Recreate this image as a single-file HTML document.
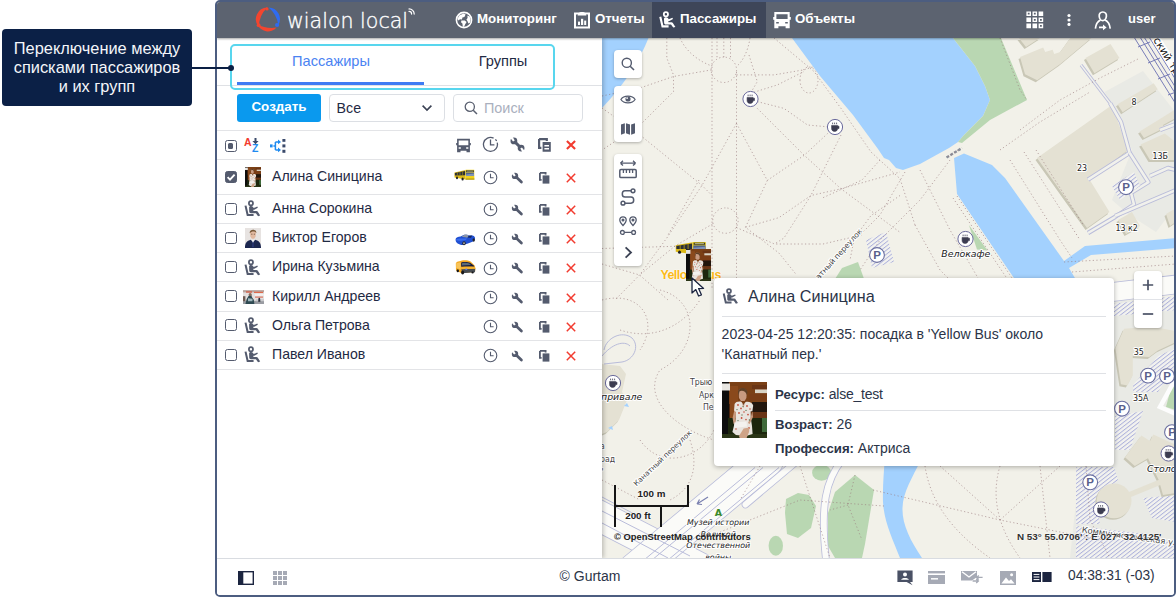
<!DOCTYPE html>
<html lang="ru">
<head>
<meta charset="utf-8">
<title>Wialon Local — Пассажиры</title>
<style>
*{box-sizing:border-box;margin:0;padding:0}
html,body{width:1176px;height:597px;overflow:hidden;background:#fff;font-family:"Liberation Sans",sans-serif;color:#1f2a44}
#callout{position:absolute;left:2px;top:29px;width:190px;height:76.5px;background:#0b2046;border-radius:4px;color:#f4f6fa;font-size:16.4px;line-height:19px;text-align:center;padding-top:10px;white-space:nowrap}
#cline{z-index:30;position:absolute;left:192px;top:67px;width:38px;height:2px;background:#0a1f44}
#cdot{position:absolute;left:228px;top:64.5px;width:6.4px;height:6.4px;border-radius:50%;background:#0a1f44;z-index:30}
#frame{position:absolute;left:215px;top:0;width:961px;height:597px;border:2px solid #4c5d80;border-radius:5px;overflow:hidden;background:#fff}
#top{position:absolute;left:0;top:0;width:957px;height:36px;background:#5c6370;color:#fff;box-shadow:0 1px 2px rgba(0,0,0,.35);z-index:5}
#left{position:absolute;left:0;top:36px;width:385px;height:520px;background:#fff;z-index:4;box-shadow:2px 0 4px rgba(0,0,0,.2)}
#map{position:absolute;left:385px;top:36px;width:572px;height:520px;background:#f2f1e9;overflow:hidden}
#foot{position:absolute;left:0;top:556px;width:957px;height:37px;background:#fff;border-top:1px solid #d9dce1;z-index:6}

#logo{position:absolute;left:70px;top:6.2px;font-family:"DejaVu Sans Light","DejaVu Sans","Liberation Sans",sans-serif;font-weight:200;font-size:20.6px;line-height:26px;letter-spacing:0px;color:#fff;white-space:nowrap;-webkit-text-stroke:0.35px #fff}
.nav{position:absolute;top:0;height:36px;display:flex;align-items:center;font-weight:700;font-size:13.3px;white-space:nowrap}
.nav svg{position:absolute;top:9px}
.nav span{position:absolute;top:9.2px;line-height:16px}
.nav.act{background:#3e4659}
#user{position:absolute;left:911px;top:9.4px;font-weight:700;font-size:13px;line-height:16px}

#hl{position:absolute;left:13px;top:6px;width:325px;height:46px;border:2px solid #58d6ee;border-radius:5px;z-index:3}
#tabline{position:absolute;left:0;top:47px;width:385px;height:1px;background:#dfe1e5}
#tabul{position:absolute;left:20px;top:44px;width:187px;height:3px;background:#3f7cf4}
.tab{position:absolute;top:12.8px;height:20px;line-height:20px;font-size:14.6px;text-align:center;white-space:nowrap}
#create{position:absolute;left:20px;top:56px;width:84px;height:28px;border-radius:3px;background:#0a99ee;color:#fff;font-weight:700;font-size:13.4px;line-height:25.6px;text-align:center}
#sel{position:absolute;left:112px;top:56px;width:116px;height:28px;border:1px solid #dcdfe4;border-radius:4px;font-size:14.2px;line-height:27px;padding-left:6.6px;color:#1f2a44}
#search{position:absolute;left:236px;top:56px;width:130px;height:28px;border:1px solid #dcdfe4;border-radius:4px;font-size:14.4px;line-height:26px;color:#aab0be}
#search span{position:absolute;left:30px;top:0}
.sep{position:absolute;left:0;width:385px;height:1px;background:#e3e4e7}
.pi{position:absolute}
.cb{position:absolute;left:8px;width:12px;height:12px;border:1.4px solid #545b6e;border-radius:2.5px;background:#fff}
.cb.on{background:#545b6e}
.cb.on svg{position:absolute;left:-1.4px;top:-1.4px}
.cb i{position:absolute;left:2px;top:2px;width:5.4px;height:5.4px;border-radius:1.5px;background:#545b6e}
.nm{position:absolute;left:55px;height:18px;line-height:18px;font-size:14.1px;white-space:nowrap;color:#1f2a44}
.az{position:absolute;font-weight:700;font-size:10.5px;line-height:11px}
.mbtn{position:absolute;width:28px;background:#fff;border-radius:4px;box-shadow:0 1px 3px rgba(0,0,0,.28)}
.mbtn svg{position:absolute}
.sb{position:absolute;background:#151515}
.sbt{position:absolute;text-align:center;font-weight:700;font-size:9.8px;line-height:12px;color:#222;text-shadow:0 0 2px #fff,0 0 2px #fff}
#osm{position:absolute;left:12px;top:492.6px;font-weight:700;font-size:9.4px;line-height:12px;color:#222;white-space:nowrap}
#coords{position:absolute;left:415px;top:493px;font-weight:700;font-size:9.85px;line-height:12px;color:#333;white-space:nowrap;text-shadow:0 0 2px #fff,0 0 2px #fff}
#ylab{position:absolute;left:58.4px;top:230.6px;font-weight:700;font-size:12.4px;letter-spacing:-0.5px;line-height:13px;color:#fbb917;white-space:nowrap;text-shadow:0 0 1.5px #fff,0 0 1.5px #fff}
#pop{position:absolute;left:112px;top:240px;width:400px;height:188px;background:#fff;border-radius:4px;box-shadow:0 1px 5px rgba(0,0,0,.3);color:#2b3448}
#ptitle{position:absolute;left:34px;top:8px;font-size:16.2px;line-height:20px;white-space:nowrap}
.psep{position:absolute;height:1px;background:#dfe1e5}
#pmsg{position:absolute;left:7.6px;top:46px;font-size:14.05px;line-height:20px;white-space:nowrap}
.prow{position:absolute;left:61px;font-size:14px;line-height:20px;white-space:nowrap}
.prow b{font-weight:700;font-size:13.2px}
#gurtam{position:absolute;left:323px;top:8.2px;width:100px;text-align:center;font-size:14px;line-height:18px;color:#2b3448}
#clock{position:absolute;left:851px;top:8.4px;font-size:13.8px;line-height:18px;color:#2b3448;white-space:nowrap}
</style>
</head>
<body>
<div id="callout">Переключение между<br>списками пассажиров<br>и их групп</div>
<div id="cline"></div><div id="cdot"></div>
<div id="frame">
<div id="top">
<svg style="position:absolute;left:37.3px;top:3.1px" width="28" height="28" viewBox="0 0 28 28">
 <path d="M13.4 2.5 A11.6 11.6 0 0 0 4.8 21.8 A27 27 0 0 1 13.4 2.5 Z" fill="#f3452f"/>
 <path d="M3.3 19.2 A11.6 11.6 0 0 0 22.6 22.6 A30 30 0 0 1 3.3 19.2 Z" fill="#f3452f"/>
 <path d="M14.6 2.6 A11.6 11.6 0 0 1 24.3 20.2 A27 27 0 0 0 14.6 2.6 Z" fill="#2f6bf0"/>
 <circle cx="13" cy="3.9" r="1.6" fill="#f3452f"/><circle cx="23.1" cy="20" r="2.1" fill="#2f6bf0"/><circle cx="4.6" cy="20.2" r="1.9" fill="#f3452f"/>
</svg>
<div id="logo">wialon local</div>
<svg style="position:absolute;left:190.5px;top:5px" width="8.6" height="8.6" viewBox="0 0 10 10" fill="none" stroke="#fff" stroke-width="1.4" stroke-linecap="round"><path d="M1.2 2.2 A6 6 0 0 1 7.2 8.2"/><path d="M1.2 5.2 A3 3 0 0 1 4.2 8.2"/></svg>

<div class="nav" style="left:231px;width:110px">
 <svg style="left:6.8px;top:8.8px" width="18" height="18" viewBox="0 0 18 18"><circle cx="9" cy="9" r="7.6" fill="none" stroke="#fff" stroke-width="1.6"/><path d="M4.2 4.6 L8.6 2.6 L10.6 3.4 L9.4 6 L7.4 6.6 L7 8.4 L5 8.2 L3.4 9.6 L2.4 8 Z M6.4 9.6 L9.8 9.4 L11.6 11 L10.2 13.2 L9 16 L7.8 15.6 L7.4 12.4 L6 11.2 Z M12.4 4.4 L14.6 5.6 L15.6 8.4 L15.2 11.4 L13.4 12.6 L12.6 10.6 L11.4 8.6 L12.6 7 Z" fill="#fff"/></svg><span style="left:29px">Мониторинг</span>
</div>
<div class="nav" style="left:350px;width:84px">
 <svg style="left:7px;top:8.8px" width="16" height="18" viewBox="0 0 16 18"><path d="M1 2.6 H15 V16.6 H1 Z" fill="none" stroke="#fff" stroke-width="2"/><path d="M4.4 2.4 C5 0.4 11 0.4 11.6 2.4 L12.4 4.4 H3.6 Z" fill="#fff"/><rect x="4" y="10.6" width="2" height="3.4" fill="#fff"/><rect x="7" y="7.8" width="2.2" height="6.2" fill="#fff"/><rect x="10.2" y="9.6" width="2" height="4.4" fill="#fff"/></svg><span style="left:28px">Отчеты</span>
</div>
<div class="nav act" style="left:435px;width:114px">
 <svg style="left:7px;top:9.2px" width="17" height="18" viewBox="0 0 17 18"><circle cx="6.9" cy="3.3" r="2.1" fill="none" stroke="#fff" stroke-width="1.8"/><path d="M1.3 5.8 L3.5 15.4 H9.6" fill="none" stroke="#fff" stroke-width="2.1"/><path d="M5 7.4 C5.4 6.2 7.6 5.8 8.6 6.8 L9.8 8.2 L13.4 6.8 L14 8 L10.4 10 L9.4 10 L9.4 11.2 L12.4 11.2 C13.2 11.2 13.6 11.6 14 12.2 L16.4 16 L14.2 16.6 L12 13.6 L7 13.6 C5.8 13.6 5.2 12.8 5.1 11.8 Z" fill="#fff"/></svg><span style="left:28px">Пассажиры</span>
</div>
<div class="nav" style="left:549px;width:100px">
 <svg style="left:7px;top:9.4px" width="18" height="18" viewBox="0 0 18 18"><path fill-rule="evenodd" fill="#fff" d="M1.3 1 H16.7 V6 H17.8 V8.8 H16.7 V17.2 H12.6 V15.3 H5.4 V17.2 H1.3 V8.8 H0.2 V6 H1.3 Z M3.4 3.3 V8 H14.6 V3.3 Z M3.2 11 V12.5 H5.8 V11 Z M12.2 11 V12.5 H14.8 V11 Z"/></svg><span style="left:29px">Объекты</span>
</div>

<svg style="position:absolute;left:809px;top:9px" width="19" height="19" viewBox="0 0 19 19" fill="#fff" fill-rule="evenodd">
 <path d="M0.4 0.4h4.6v4.6h-4.6z M1.8 1.8v1.8h1.8v-1.8z"/><path d="M6.5 0.4h4.6v4.6h-4.6z M7.9 1.8v1.8h1.8v-1.8z"/><path d="M12.6 0.4h4.6v4.6h-4.6z"/>
 <path d="M0.4 6.5h4.6v4.6h-4.6z"/><path d="M6.5 6.5h4.6v4.6h-4.6z M7.9 7.9v1.8h1.8v-1.8z"/><path d="M12.6 6.5h4.6v4.6h-4.6z M14 7.9v1.8h1.8v-1.8z"/>
 <path d="M0.4 12.6h4.6v4.6h-4.6z"/><path d="M6.5 12.6h4.6v4.6h-4.6z"/><path d="M12.6 12.6h4.6v4.6h-4.6z M14 14v1.8h1.8v-1.8z"/>
</svg>
<svg style="position:absolute;left:849px;top:10px" width="6" height="18" viewBox="0 0 6 18" fill="#fff"><circle cx="3" cy="3.5" r="1.6"/><circle cx="3" cy="8" r="1.6"/><circle cx="3" cy="12.4" r="1.6"/></svg>
<svg style="position:absolute;left:877px;top:7.5px" width="19" height="21" viewBox="0 0 19 21" fill="none" stroke="#fff"><path d="M8.8 2 C11.4 2 12.6 4 12.4 6.2 C12.2 8.6 10.6 10.6 8.8 10.6 C7 10.6 5.4 8.6 5.2 6.2 C5 4 6.2 2 8.8 2 Z" stroke-width="1.7"/><path d="M6.6 10 C3.8 11.2 2 13.4 1.4 18.6" stroke-width="1.7"/><path d="M11 10 C13.8 11.2 15.6 13.4 16.2 18.6" stroke-width="1.7"/><path d="M5 17.4 H10.4" stroke-width="1.7"/><path d="M9 14.6 L12.6 17.4 L9 20.2 Z" fill="#fff" stroke="none"/></svg>
<div id="user">user</div>
</div>
<div id="left"><div id="tabline"></div><div id="tabul"></div>
<div id="hl"></div>
<div class="tab" style="left:14px;width:200px;color:#4b83f2">Пассажиры</div>
<div class="tab" style="left:186px;width:200px;color:#1f2a44">Группы</div>
<div id="create">Создать</div>
<div id="sel">Все<svg width="12" height="8" viewBox="0 0 12 8" style="position:absolute;left:91px;top:9.2px"><path d="M1.6 1.6 L6 6 L10.4 1.6" fill="none" stroke="#3b4254" stroke-width="1.6"/></svg></div>
<div id="search"><svg width="14" height="14" viewBox="0 0 14 14" style="position:absolute;left:10px;top:6px"><circle cx="5.8" cy="5.8" r="4.6" fill="none" stroke="#5a6070" stroke-width="1.3"/><path d="M9.2 9.2 L13 13" stroke="#5a6070" stroke-width="1.5"/></svg><span>Поиск</span></div>
<div class="sep" style="top:92px"></div>
<div class="sep" style="top:121px"></div>
<div class="sep" style="top:156px"></div>
<div class="sep" style="top:185px"></div>
<div class="sep" style="top:214px"></div>
<div class="sep" style="top:243px"></div>
<div class="sep" style="top:273px"></div>
<div class="sep" style="top:302px"></div>
<div class="sep" style="top:331px"></div>
<span class="cb" style="top:102.2px"><i></i></span>
<span class="az" style="left:27px;top:99.0px;color:#f23b2f">A</span>
<span class="az" style="left:35px;top:104.6px;color:#1f8bf0">Z</span>
<svg class="pi" style="left:35px;top:100px" width="7" height="7" viewBox="0 0 7 7"><path d="M2.5 0 H4.5 V3 H6.6 L3.5 6.2 L0.4 3 H2.5 Z" fill="#3b4a6b"/></svg>
<svg class="pi" style="left:53px;top:101px" width="16" height="14" viewBox="0 0 16 14"><rect x="0" y="5.4" width="2.6" height="3" fill="#1f8bf0"/><path d="M3.4 6.9 H5.4 M5.4 2.9 V10.9 M5.4 2.9 H8.4 M5.4 10.9 H8.4" stroke="#1f8bf0" stroke-width="1.5" fill="none"/><path d="M8 0.6 L11 2.9 L8 5.2 Z M8 8.6 L11 10.9 L8 13.2 Z" fill="#1f8bf0"/><rect x="12.4" y="0" width="3" height="2.8" fill="#3b4a6b"/><rect x="12.4" y="5.4" width="3" height="3" fill="#3b4a6b"/><rect x="12.4" y="10.8" width="3" height="3" fill="#3b4a6b"/></svg>
<svg class="pi" style="left:238px;top:100px" width="17" height="15" viewBox="0 0 18 18"><path fill-rule="evenodd" fill="#545b6e" d="M1.3 1 H16.7 V6 H17.8 V8.8 H16.7 V17.2 H12.6 V15.3 H5.4 V17.2 H1.3 V8.8 H0.2 V6 H1.3 Z M3.2 3 V8.6 H14.8 V3 Z M3.2 11 V12.8 H5.8 V11 Z M12.2 11 V12.8 H14.8 V11 Z"/></svg>
<svg class="pi" style="left:265px;top:98px" width="17" height="17" viewBox="0 0 17 17" fill="none" stroke="#545b6e"><path d="M11.6 2.2 A7 7 0 1 0 15.2 6.6" stroke-width="1.3"/><path d="M13.4 3.4 A7 7 0 0 1 14.6 5" stroke-width="1.3"/><path d="M8.5 3.6 V8.9 H12.4" stroke-width="1.3"/></svg>
<svg class="pi" style="left:293px;top:99.4px" width="15" height="15" viewBox="0 0 15 15"><circle cx="3.9" cy="3.9" r="3.4" fill="#545b6e"/><circle cx="11.1" cy="11.1" r="3.4" fill="#545b6e"/><path d="M4 4 L11 11" stroke="#545b6e" stroke-width="3" stroke-linecap="round"/><path d="M4.6 3.2 L1.8 0.4 L0 0 L0 2.2 L3.2 4.6 Z" fill="#fff" transform="rotate(14 3.9 3.9)"/><path d="M10.4 11.8 L13.2 14.6 L15 15 L15 12.8 L11.8 10.4 Z" fill="#fff" transform="rotate(14 11.1 11.1)"/></svg>
<svg class="pi" style="left:321px;top:100px" width="13" height="14" viewBox="0 0 13 14"><path d="M1.1 1.1 H8.8 V3 M1.1 1.1 V9.8 H3.4" fill="none" stroke="#545b6e" stroke-width="2.2"/><path fill-rule="evenodd" d="M4.6 4 H12.8 V13.8 H4.6 Z M6.4 7 V8.4 H11 V7 Z M6.4 10 V11.4 H11 V10 Z" fill="#545b6e"/></svg>
<svg class="pi" style="left:349px;top:102px" width="10" height="10" viewBox="0 0 10 10"><path d="M0.9 0.9 L9.1 9.1 M9.1 0.9 L0.9 9.1" stroke="#f23b2f" stroke-width="2.1" fill="none"/></svg>
<span class="cb on" style="top:133.1px"><svg width="12" height="12" viewBox="0 0 12 12"><path d="M2.6 6.2 L5 8.6 L9.6 3.6" fill="none" stroke="#fff" stroke-width="1.9"/></svg></span>
<svg class="pi" style="left:28px;top:129.0px" width="16" height="20"><use href="#photo" width="16" height="20"/></svg>
<div class="nm" style="top:128.7px">Алина Синицина</div>
<svg class="pi" style="left:237px;top:130.5px" width="21" height="12" viewBox="0 0 21 12"><path d="M0.5 3.4 L11.6 0.9 L11.6 10.6 L0.5 8.6 Z" fill="#dcb916"/><path d="M0.9 3.9 L11.2 2 L11.2 6.3 L0.9 6.4 Z" fill="#2b2f38"/><path d="M3.4 3.4 V6.4 M6 3 V6.4 M8.6 2.4 V6.4" stroke="#b89c14" stroke-width=".6"/><path d="M11.6 0.8 H20.2 L20.4 10.6 H11.6 Z" fill="#f2d31a"/><rect x="12.2" y="1.3" width="7.6" height="1.7" fill="#34352a"/><rect x="13" y="1.7" width="6" height=".8" fill="#b9b98a"/><rect x="12" y="3.5" width="8" height="3.4" fill="#52658f"/><path d="M12 5.4 L20 4.6 V6.9 H12 Z" fill="#7f93b8"/><rect x="11.6" y="9.6" width="8.8" height="1" fill="#a48c10"/><ellipse cx="3" cy="8.9" rx="1" ry="1.3" fill="#1d1f25"/><ellipse cx="8.6" cy="10" rx="1.1" ry="1.5" fill="#1d1f25"/></svg>
<svg class="pi" style="left:266px;top:132.0px" width="15" height="15" viewBox="0 0 15 15" fill="none" stroke="#545b6e"><circle cx="7.5" cy="7.5" r="6.3" stroke-width="1.1"/><path d="M7.5 3.8 V7.7 H10.6" stroke-width="1.1"/></svg>
<svg class="pi" style="left:294px;top:133.5px" width="13" height="13" viewBox="0 0 13 13"><circle cx="4" cy="3.9" r="3.2" fill="#545b6e"/><path d="M4.4 4.3 L10.4 10.1" stroke="#545b6e" stroke-width="2.8" stroke-linecap="round"/><path d="M4.6 3.3 L1.8 0.5 L0 0 L0 2.2 L3.2 4.7 Z" fill="#fff" transform="rotate(12 4 3.9)"/></svg>
<svg class="pi" style="left:322px;top:133.7px" width="11" height="12" viewBox="0 0 11 12"><path d="M0.9 0.9 H6.6 V2.4 M0.9 0.9 V7.8 H2.6" fill="none" stroke="#545b6e" stroke-width="1.8"/><rect x="3.6" y="3.4" width="6.8" height="8.2" fill="#545b6e"/></svg>
<svg class="pi" style="left:349px;top:134.5px" width="10" height="10" viewBox="0 0 10 10"><path d="M0.8 0.8 L9.2 9.2 M9.2 0.8 L0.8 9.2" stroke="#f23b2f" stroke-width="1.5" fill="none"/></svg>
<span class="cb" style="top:165.1px"></span>
<svg class="pi" style="left:27.3px;top:162.1px" width="17" height="17.5" viewBox="0 0 17 18"><circle cx="6.9" cy="3.3" r="2.1" fill="none" stroke="#545b6e" stroke-width="1.8"/><path d="M1.3 5.8 L3.5 15.4 H9.6" fill="none" stroke="#545b6e" stroke-width="2.1"/><path d="M5 7.4 C5.4 6.2 7.6 5.8 8.6 6.8 L9.8 8.2 L13.4 6.8 L14 8 L10.4 10 L9.4 10 L9.4 11.2 L12.4 11.2 C13.2 11.2 13.6 11.6 14 12.2 L16.4 16 L14.2 16.6 L12 13.6 L7 13.6 C5.8 13.6 5.2 12.8 5.1 11.8 Z" fill="#545b6e"/></svg>
<div class="nm" style="top:160.7px">Анна Сорокина</div>
<svg class="pi" style="left:266px;top:164.0px" width="15" height="15" viewBox="0 0 15 15" fill="none" stroke="#545b6e"><circle cx="7.5" cy="7.5" r="6.3" stroke-width="1.1"/><path d="M7.5 3.8 V7.7 H10.6" stroke-width="1.1"/></svg>
<svg class="pi" style="left:294px;top:165.5px" width="13" height="13" viewBox="0 0 13 13"><circle cx="4" cy="3.9" r="3.2" fill="#545b6e"/><path d="M4.4 4.3 L10.4 10.1" stroke="#545b6e" stroke-width="2.8" stroke-linecap="round"/><path d="M4.6 3.3 L1.8 0.5 L0 0 L0 2.2 L3.2 4.7 Z" fill="#fff" transform="rotate(12 4 3.9)"/></svg>
<svg class="pi" style="left:322px;top:165.7px" width="11" height="12" viewBox="0 0 11 12"><path d="M0.9 0.9 H6.6 V2.4 M0.9 0.9 V7.8 H2.6" fill="none" stroke="#545b6e" stroke-width="1.8"/><rect x="3.6" y="3.4" width="6.8" height="8.2" fill="#545b6e"/></svg>
<svg class="pi" style="left:349px;top:166.5px" width="10" height="10" viewBox="0 0 10 10"><path d="M0.8 0.8 L9.2 9.2 M9.2 0.8 L0.8 9.2" stroke="#f23b2f" stroke-width="1.5" fill="none"/></svg>
<span class="cb" style="top:193.6px"></span>
<svg class="pi" style="left:28px;top:189.8px" width="16" height="20" viewBox="0 0 16 20"><rect width="16" height="20" fill="#e7e3e1"/><path d="M5 5 C4.8 1.4 11.2 1.4 11 5 L10.6 8.6 L9.2 10.8 H6.8 L5.4 8.6 Z" fill="#e2b9a0"/><path d="M4.7 5.2 C4 0.6 12 0.6 11.3 5.2 C10.4 3.2 7 2.6 4.7 5.2 Z" fill="#7a5a3a"/><path d="M0 20 C0 15 1.6 13 6 11.8 L8 14.6 L10 11.8 C14.4 13 16 15 16 20 Z" fill="#1c2750"/><path d="M6.4 11.6 L8 15 L9.6 11.6 L8 12.4 Z" fill="#f4f4f6"/><path d="M7.6 13.4 L8.4 13.4 L8.8 18.6 L8 19.6 L7.2 18.6 Z" fill="#2b3a7a"/><path d="M6.2 6.2 H7.4 M8.8 6.2 H10" stroke="#5a4030" stroke-width=".7"/></svg>
<div class="nm" style="top:190.0px">Виктор Егоров</div>
<svg class="pi" style="left:238px;top:196.3px" width="21" height="12" viewBox="0 0 21 12"><path d="M0.6 5 C1 3.6 3 3 5.6 2.6 L8 1.2 C10 0.4 13 0.6 14.4 1.6 L17.6 1.4 C19.4 1.8 20.2 3 20 4.6 L19.6 6.4 C17 8 13 9.4 9.6 10.6 C7 11.4 4.6 10.6 2.6 9.4 C1 8.4 0.4 6.6 0.6 5 Z" fill="#2050d2"/><path d="M6.6 2.9 L9 0.9 C10.6 0.3 12.6 0.5 13.6 1.4 L12.4 3.7 C10.6 3 8.4 2.8 6.6 2.9 Z" fill="#8e97a6"/><path d="M12.6 3.5 L14 1.7 L17.2 1.6 L16 3.8 Z" fill="#17265a"/><path d="M1 5.4 C3 4.4 6 4.2 8.4 4.6 L12 4.2 L11 6 C8 6.6 4 7 1.4 6.6 Z" fill="#3a6cec"/><ellipse cx="9" cy="9.3" rx="1.7" ry="2" fill="#23252c"/><ellipse cx="9" cy="9.3" rx=".8" ry="1" fill="#b9bcc4"/><ellipse cx="18.7" cy="6" rx="1.2" ry="1.7" fill="#23252c"/></svg>
<svg class="pi" style="left:266px;top:193.3px" width="15" height="15" viewBox="0 0 15 15" fill="none" stroke="#545b6e"><circle cx="7.5" cy="7.5" r="6.3" stroke-width="1.1"/><path d="M7.5 3.8 V7.7 H10.6" stroke-width="1.1"/></svg>
<svg class="pi" style="left:294px;top:194.8px" width="13" height="13" viewBox="0 0 13 13"><circle cx="4" cy="3.9" r="3.2" fill="#545b6e"/><path d="M4.4 4.3 L10.4 10.1" stroke="#545b6e" stroke-width="2.8" stroke-linecap="round"/><path d="M4.6 3.3 L1.8 0.5 L0 0 L0 2.2 L3.2 4.7 Z" fill="#fff" transform="rotate(12 4 3.9)"/></svg>
<svg class="pi" style="left:322px;top:195.0px" width="11" height="12" viewBox="0 0 11 12"><path d="M0.9 0.9 H6.6 V2.4 M0.9 0.9 V7.8 H2.6" fill="none" stroke="#545b6e" stroke-width="1.8"/><rect x="3.6" y="3.4" width="6.8" height="8.2" fill="#545b6e"/></svg>
<svg class="pi" style="left:349px;top:195.8px" width="10" height="10" viewBox="0 0 10 10"><path d="M0.8 0.8 L9.2 9.2 M9.2 0.8 L0.8 9.2" stroke="#f23b2f" stroke-width="1.5" fill="none"/></svg>
<span class="cb" style="top:222.8px"></span>
<svg class="pi" style="left:27.3px;top:220.6px" width="17" height="17.5" viewBox="0 0 17 18"><circle cx="6.9" cy="3.3" r="2.1" fill="none" stroke="#545b6e" stroke-width="1.8"/><path d="M1.3 5.8 L3.5 15.4 H9.6" fill="none" stroke="#545b6e" stroke-width="2.1"/><path d="M5 7.4 C5.4 6.2 7.6 5.8 8.6 6.8 L9.8 8.2 L13.4 6.8 L14 8 L10.4 10 L9.4 10 L9.4 11.2 L12.4 11.2 C13.2 11.2 13.6 11.6 14 12.2 L16.4 16 L14.2 16.6 L12 13.6 L7 13.6 C5.8 13.6 5.2 12.8 5.1 11.8 Z" fill="#545b6e"/></svg>
<div class="nm" style="top:219.2px">Ирина Кузьмина</div>
<svg class="pi" style="left:238px;top:222.0px" width="21" height="15" viewBox="0 0 21 15"><path d="M0.8 3.6 C1 2 2.4 1.4 4.4 1.2 L7 0.5 C10 0 13.6 0.4 15.6 1.6 L19.6 5.6 L20.4 8.6 L20 12 L6.6 13.2 L1 10.6 Z" fill="#f5a81f"/><path d="M1.2 3.2 L5.6 2.2 L5.8 9.6 L1.2 8 Z" fill="#f8c45a"/><path d="M6.2 2.6 C9 1.8 13 2 15 2.8 L19.4 6 L19 6.8 C15 6.2 10 6.4 6.2 6.8 Z" fill="#141a3e"/><path d="M7 3.2 C9.6 2.6 12.6 2.8 14.4 3.4 L16 5 L7 5.6 Z" fill="#5b6a78"/><path d="M6.4 9 L20.2 8.6 L20 12.2 L7 13.2 Z" fill="#474c52"/><path d="M6.2 7 L20 6.8 L20.3 8.8 L6.4 9.2 Z" fill="#f7b32c"/><rect x="10.4" y="8.6" width="1.8" height="1.3" fill="#5f7df0"/><ellipse cx="2.8" cy="10.8" rx="1.2" ry="1.5" fill="#15161a"/><ellipse cx="7.6" cy="12.6" rx="1.5" ry="2" fill="#15161a"/><ellipse cx="17.6" cy="12.6" rx="1.2" ry="1" fill="#15161a"/></svg>
<svg class="pi" style="left:266px;top:222.5px" width="15" height="15" viewBox="0 0 15 15" fill="none" stroke="#545b6e"><circle cx="7.5" cy="7.5" r="6.3" stroke-width="1.1"/><path d="M7.5 3.8 V7.7 H10.6" stroke-width="1.1"/></svg>
<svg class="pi" style="left:294px;top:224.0px" width="13" height="13" viewBox="0 0 13 13"><circle cx="4" cy="3.9" r="3.2" fill="#545b6e"/><path d="M4.4 4.3 L10.4 10.1" stroke="#545b6e" stroke-width="2.8" stroke-linecap="round"/><path d="M4.6 3.3 L1.8 0.5 L0 0 L0 2.2 L3.2 4.7 Z" fill="#fff" transform="rotate(12 4 3.9)"/></svg>
<svg class="pi" style="left:322px;top:224.2px" width="11" height="12" viewBox="0 0 11 12"><path d="M0.9 0.9 H6.6 V2.4 M0.9 0.9 V7.8 H2.6" fill="none" stroke="#545b6e" stroke-width="1.8"/><rect x="3.6" y="3.4" width="6.8" height="8.2" fill="#545b6e"/></svg>
<svg class="pi" style="left:349px;top:225.0px" width="10" height="10" viewBox="0 0 10 10"><path d="M0.8 0.8 L9.2 9.2 M9.2 0.8 L0.8 9.2" stroke="#f23b2f" stroke-width="1.5" fill="none"/></svg>
<span class="cb" style="top:252.3px"></span>
<svg class="pi" style="left:26px;top:251.7px" width="21" height="14.4" viewBox="0 0 21 14"><rect width="21" height="14" fill="#e4e0df"/><rect x="0" y="0" width="21" height="2.2" fill="#b8a39c"/><rect x="3" y="1.2" width="6" height="1.2" fill="#d4553a"/><rect x="11" y="1.6" width="9" height="1.2" fill="#e0694a"/><rect x="12" y="4" width="9" height="1.4" fill="#f6f4f3"/><rect x="12" y="6.4" width="8" height="1" fill="#d8604a"/><rect x="0" y="10.6" width="21" height="3.4" fill="#9a9ca2"/><rect x="13" y="9" width="8" height="2" fill="#c9cacd"/><path d="M2.4 14 L3.6 9 L5.4 6 L6.6 4.4 L8.2 4.6 L9 7 L10.8 9.6 L11.4 14 Z" fill="#2f4a52"/><circle cx="7.2" cy="4.2" r="1.5" fill="#8a6a5a"/><path d="M5 8 L9.6 8.6 L9.4 11 L5 11 Z" fill="#9fb7bd"/><path d="M15.4 8 L17 7.6 L17.4 11.6 L15.2 11.6 Z" fill="#2a2f3a"/><rect x="0" y="6" width="2.4" height="5" fill="#6d5a52"/></svg>
<div class="nm" style="top:248.7px">Кирилл Андреев</div>
<svg class="pi" style="left:266px;top:252.0px" width="15" height="15" viewBox="0 0 15 15" fill="none" stroke="#545b6e"><circle cx="7.5" cy="7.5" r="6.3" stroke-width="1.1"/><path d="M7.5 3.8 V7.7 H10.6" stroke-width="1.1"/></svg>
<svg class="pi" style="left:294px;top:253.5px" width="13" height="13" viewBox="0 0 13 13"><circle cx="4" cy="3.9" r="3.2" fill="#545b6e"/><path d="M4.4 4.3 L10.4 10.1" stroke="#545b6e" stroke-width="2.8" stroke-linecap="round"/><path d="M4.6 3.3 L1.8 0.5 L0 0 L0 2.2 L3.2 4.7 Z" fill="#fff" transform="rotate(12 4 3.9)"/></svg>
<svg class="pi" style="left:322px;top:253.7px" width="11" height="12" viewBox="0 0 11 12"><path d="M0.9 0.9 H6.6 V2.4 M0.9 0.9 V7.8 H2.6" fill="none" stroke="#545b6e" stroke-width="1.8"/><rect x="3.6" y="3.4" width="6.8" height="8.2" fill="#545b6e"/></svg>
<svg class="pi" style="left:349px;top:254.5px" width="10" height="10" viewBox="0 0 10 10"><path d="M0.8 0.8 L9.2 9.2 M9.2 0.8 L0.8 9.2" stroke="#f23b2f" stroke-width="1.5" fill="none"/></svg>
<span class="cb" style="top:281.3px"></span>
<svg class="pi" style="left:27.3px;top:279.1px" width="17" height="17.5" viewBox="0 0 17 18"><circle cx="6.9" cy="3.3" r="2.1" fill="none" stroke="#545b6e" stroke-width="1.8"/><path d="M1.3 5.8 L3.5 15.4 H9.6" fill="none" stroke="#545b6e" stroke-width="2.1"/><path d="M5 7.4 C5.4 6.2 7.6 5.8 8.6 6.8 L9.8 8.2 L13.4 6.8 L14 8 L10.4 10 L9.4 10 L9.4 11.2 L12.4 11.2 C13.2 11.2 13.6 11.6 14 12.2 L16.4 16 L14.2 16.6 L12 13.6 L7 13.6 C5.8 13.6 5.2 12.8 5.1 11.8 Z" fill="#545b6e"/></svg>
<div class="nm" style="top:277.7px">Ольга Петрова</div>
<svg class="pi" style="left:266px;top:281.0px" width="15" height="15" viewBox="0 0 15 15" fill="none" stroke="#545b6e"><circle cx="7.5" cy="7.5" r="6.3" stroke-width="1.1"/><path d="M7.5 3.8 V7.7 H10.6" stroke-width="1.1"/></svg>
<svg class="pi" style="left:294px;top:282.5px" width="13" height="13" viewBox="0 0 13 13"><circle cx="4" cy="3.9" r="3.2" fill="#545b6e"/><path d="M4.4 4.3 L10.4 10.1" stroke="#545b6e" stroke-width="2.8" stroke-linecap="round"/><path d="M4.6 3.3 L1.8 0.5 L0 0 L0 2.2 L3.2 4.7 Z" fill="#fff" transform="rotate(12 4 3.9)"/></svg>
<svg class="pi" style="left:322px;top:282.7px" width="11" height="12" viewBox="0 0 11 12"><path d="M0.9 0.9 H6.6 V2.4 M0.9 0.9 V7.8 H2.6" fill="none" stroke="#545b6e" stroke-width="1.8"/><rect x="3.6" y="3.4" width="6.8" height="8.2" fill="#545b6e"/></svg>
<svg class="pi" style="left:349px;top:283.5px" width="10" height="10" viewBox="0 0 10 10"><path d="M0.8 0.8 L9.2 9.2 M9.2 0.8 L0.8 9.2" stroke="#f23b2f" stroke-width="1.5" fill="none"/></svg>
<span class="cb" style="top:310.6px"></span>
<svg class="pi" style="left:27.3px;top:308.4px" width="17" height="17.5" viewBox="0 0 17 18"><circle cx="6.9" cy="3.3" r="2.1" fill="none" stroke="#545b6e" stroke-width="1.8"/><path d="M1.3 5.8 L3.5 15.4 H9.6" fill="none" stroke="#545b6e" stroke-width="2.1"/><path d="M5 7.4 C5.4 6.2 7.6 5.8 8.6 6.8 L9.8 8.2 L13.4 6.8 L14 8 L10.4 10 L9.4 10 L9.4 11.2 L12.4 11.2 C13.2 11.2 13.6 11.6 14 12.2 L16.4 16 L14.2 16.6 L12 13.6 L7 13.6 C5.8 13.6 5.2 12.8 5.1 11.8 Z" fill="#545b6e"/></svg>
<div class="nm" style="top:307.0px">Павел Иванов</div>
<svg class="pi" style="left:266px;top:310.3px" width="15" height="15" viewBox="0 0 15 15" fill="none" stroke="#545b6e"><circle cx="7.5" cy="7.5" r="6.3" stroke-width="1.1"/><path d="M7.5 3.8 V7.7 H10.6" stroke-width="1.1"/></svg>
<svg class="pi" style="left:294px;top:311.8px" width="13" height="13" viewBox="0 0 13 13"><circle cx="4" cy="3.9" r="3.2" fill="#545b6e"/><path d="M4.4 4.3 L10.4 10.1" stroke="#545b6e" stroke-width="2.8" stroke-linecap="round"/><path d="M4.6 3.3 L1.8 0.5 L0 0 L0 2.2 L3.2 4.7 Z" fill="#fff" transform="rotate(12 4 3.9)"/></svg>
<svg class="pi" style="left:322px;top:312.0px" width="11" height="12" viewBox="0 0 11 12"><path d="M0.9 0.9 H6.6 V2.4 M0.9 0.9 V7.8 H2.6" fill="none" stroke="#545b6e" stroke-width="1.8"/><rect x="3.6" y="3.4" width="6.8" height="8.2" fill="#545b6e"/></svg>
<svg class="pi" style="left:349px;top:312.8px" width="10" height="10" viewBox="0 0 10 10"><path d="M0.8 0.8 L9.2 9.2 M9.2 0.8 L0.8 9.2" stroke="#f23b2f" stroke-width="1.5" fill="none"/></svg></div>
<div id="map"><svg id="msvg" width="572" height="520" viewBox="602 38 572 520" style="position:absolute;left:0;top:0">
<rect x="602" y="38" width="572" height="520" fill="#f2f1e9"/>
<path d="M1104.5 92 L1143 71 L1176 113 L1176 206 L1156 232 L1128 214 L1112 200 L1132 150 L1112 105 Z" fill="#e9eae5"/>
<path d="M1110 300 L1176 300 L1176 558 L1070 558 L1074 520 L1080 470 L1100 420 L1112 330 Z" fill="#e9eae5"/>
<path d="M602 38 L648.5 38 C640 60 625 84 602 108 Z" fill="#a3d1fe"/>
<path d="M792 38 L820 76 L853 115 L878 149 L884 158 L889 160 L896 168 L903 170 L920 164 L949 148 L958 142 L964 135 L975 124 L983 116 L990 100 L985 86 L975 66 L953 38 Z" fill="#a3d1fe"/>
<path d="M954 158 L964 153.5 L992 165 L1005 178 L1064 261 L1085 246 L1176 238 L1176 248 L1091 255 L1069 268 L1082 290 L1022 290 L957 194 Z" fill="#a3d1fe"/>
<path d="M884.6 460 L921 460 C912 478 903 492 902.5 508 C902 524 910 540 922 558 L900 558 C893 540 884 522 883 502 C882.5 486 884 472 884.6 460 Z" fill="#a3d1fe"/>
<path d="M953 38 L1001 38 L1027 100 L990 120 L962 143 L958 142 L964 135 L975 124 L983 116 L990 100 L985 86 L975 66 Z" fill="#b9d7b2"/>
<path d="M968.9 225 L987.6 250.6 L977 249.5 Z" fill="#b9d7b2"/>
<path d="M855 475 L874 490 L865 544 L862 558 L835 558 L828 546 L828 513 L835 492 Z" fill="#b9d7b2"/>
<path d="M786 499 L798 493 L809 495 L816 506 L811 528 L798 538 L787 534 L785 513 Z" fill="#b9d7b2"/>
<ellipse cx="821.6" cy="472.7" rx="9.5" ry="8" fill="#b9d7b2"/>
<ellipse cx="775.8" cy="545.7" rx="7.2" ry="10" fill="#b9d7b2"/>
<path d="M765 492 L790 470 L802 480 L800 520 L778 526 L766 512 Z" fill="#b9d7b2" opacity="0"/>
<path d="M828 290 L842 268 L858 262 L868 290 Z" fill="#b9d7b2"/>
<path d="M846 250 L858 246 L862 262 L850 266 Z" fill="#b9d7b2" opacity=".0"/>
<path d="M1172 384 L1176 380 L1176 410 L1166 407 Z" fill="#b9d7b0"/>
<polygon points="1018.5,59 1041.7,49.6 1043.7,54 1051.1,51.7 1052.7,56 1058.8,54 1068.8,40 1089.9,40 1058.8,66 1035.7,82.2 1023.5,76.2" fill="#c9c7b6"/>
<polygon points="1020,57 1043.2,47.6 1045.2,52 1052.6,49.7 1054.2,54 1060.3,52 1070.3,38 1091.4,38 1060.3,64 1037.2,80.2 1025,74.2" fill="#e4e1d3"/>
<polygon points="1017.5,40 1038.5,40 1024.5,49 1020.5,44" fill="#c9c7b6"/>
<polygon points="1019,38 1040,38 1026,47 1022,42" fill="#e4e1d3"/>
<polygon points="1083.9,60 1109.0,46 1118.0,60 1092.9,75.2" fill="#c9c7b6"/>
<polygon points="1085.4,58 1110.5,44 1119.5,58 1094.4,73.2" fill="#e4e1d3"/>
<polygon points="1116.0,106.3 1152.2,85.2 1156.2,91.2 1121.1,114.3" fill="#c9c7b6"/>
<polygon points="1117.5,104.3 1153.7,83.2 1157.7,89.2 1122.6,112.3" fill="#e4e1d3"/>
<polygon points="1035.5,160 1110.5,107 1126.5,152 1088.0,181.5 1108.0,214 1085.5,230" fill="#c9c7b6"/>
<polygon points="1037,158 1112,105 1128,150 1089.5,179.5 1109.5,212 1087,228" fill="#e4e1d3"/>
<polygon points="1138.1,133.4 1159.2,120.4 1172.3,112.3 1174.5,116 1174.5,120 1161.5,127 1162.5,130 1142.5,140" fill="#c9c7b6"/>
<polygon points="1139.6,131.4 1160.7,118.4 1173.8,110.3 1176,114 1176,118 1163,125 1164,128 1144,138" fill="#e4e1d3"/>
<polygon points="1139.1,146.5 1163.3,135.4 1174.5,144.5 1174.5,162 1148.5,162" fill="#c9c7b6"/>
<polygon points="1140.6,144.5 1164.8,133.4 1176,142.5 1176,160 1150,160" fill="#e4e1d3"/>
<polygon points="1116.5,222 1130.5,214 1138.5,228 1124.5,236" fill="#c9c7b6"/>
<polygon points="1118,220 1132,212 1140,226 1126,234" fill="#e4e1d3"/>
<polygon points="1164.5,216 1174.5,210 1174.5,224 1168.5,228" fill="#c9c7b6"/>
<polygon points="1166,214 1176,208 1176,222 1170,226" fill="#e4e1d3"/>
<polygon points="600.5,366 618.5,368 624.5,376 620.5,394 625.5,402 617.5,422 605.5,434 600.5,436" fill="#c9c7b6"/>
<polygon points="602,364 620,366 626,374 622,392 627,400 619,420 607,432 602,434" fill="#e4e1d3"/>
<path d="M604 350 C606 338 622 330 632 338 C640 346 634 360 622 362 L604 364 M602 356 C612 344 624 340 630 346" fill="none" stroke="#b9bcda" stroke-width="1"/>
<path d="M624 406 l3 -3 l2 4 z M608 428 l4 -2 l1 4 z" fill="#a3d1fe"/>
<path d="M580 506 L700 568" fill="none" stroke="#b9bcda" stroke-width="31.6" stroke-linecap="round"/>
<path d="M580 506 L700 568" fill="none" stroke="#fbfbf8" stroke-width="30" stroke-linecap="round"/>
<path d="M634.8 570 L678 534 L766.8 460" fill="none" stroke="#b9bcda" stroke-width="34.6" stroke-linecap="round"/>
<path d="M634.8 570 L678 534 L766.8 460" fill="none" stroke="#fbfbf8" stroke-width="33" stroke-linecap="round"/>
<path d="M644 560 L678 531.7 L755 467.5 M652 560 L686 531.7 L763 467.5 M668 560 L702 531.7 L779 467.5 M602 497 L640 517 M602 511 L690 556 M602 523 L668 558" fill="none" stroke="#b9bcda" stroke-width="1"/>
<path d="M745.5 504.5 L800 458.6" fill="none" stroke="#b9bcda" stroke-width="7.6" stroke-linecap="round"/>
<path d="M745.5 504.5 L800 458.6" fill="none" stroke="#fbfbf8" stroke-width="6" stroke-linecap="round"/>
<path d="M842 460 C826 480 820 505 826 560" fill="none" stroke="#b9bcda" stroke-width="7.6" stroke-linecap="round"/>
<path d="M842 460 C826 480 820 505 826 560" fill="none" stroke="#fbfbf8" stroke-width="6" stroke-linecap="round"/>
<path d="M1108 292.5 L1176 284.5" fill="none" stroke="#b9bcda" stroke-width="19.6" stroke-linecap="round"/>
<path d="M1108 292.5 L1176 284.5" fill="none" stroke="#fbfbf8" stroke-width="18" stroke-linecap="round"/>
<path d="M1081 65 L1110 103" fill="none" stroke="#b9bcda" stroke-width="3.2" stroke-linejoin="round"/>
<path d="M1081 65 L1110 103" fill="none" stroke="#f1f1ec" stroke-width="1.4" stroke-linejoin="round"/>
<path d="M1110 103 L1121 122 L1129.6 152.8 L1088 179.6" fill="none" stroke="#b9bcda" stroke-width="4.4" stroke-linejoin="round"/>
<path d="M1110 103 L1121 122 L1129.6 152.8 L1088 179.6" fill="none" stroke="#f1f1ec" stroke-width="2.6" stroke-linejoin="round"/>
<path d="M1129.6 152.8 L1148.4 182.2 L1131 193 L1134 204.5 L1115 217 L1088 233" fill="none" stroke="#b9bcda" stroke-width="4.4" stroke-linejoin="round"/>
<path d="M1129.6 152.8 L1148.4 182.2 L1131 193 L1134 204.5 L1115 217 L1088 233" fill="none" stroke="#f1f1ec" stroke-width="2.6" stroke-linejoin="round"/>
<path d="M1115 216 L1176 190" fill="none" stroke="#b9bcda" stroke-width="4.4" stroke-linejoin="round"/>
<path d="M1115 216 L1176 190" fill="none" stroke="#f1f1ec" stroke-width="2.6" stroke-linejoin="round"/>
<path d="M1160 130 L1176 124 M1150 176 L1168 168 L1176 170" fill="none" stroke="#b9bcda" stroke-width="4.4" stroke-linejoin="round"/>
<path d="M1160 130 L1176 124 M1150 176 L1168 168 L1176 170" fill="none" stroke="#f1f1ec" stroke-width="2.6" stroke-linejoin="round"/>
<path d="M1155 38 L1176 72" stroke="#fdfdfb" stroke-width="10" fill="none"/>
<path d="M1134.6 38 L1176 104.3 M1140.6 38 L1176 94.7 M1144.7 38 L1176 88.2 M1149.7 38 L1176 80.2" stroke="#6a6fb2" stroke-width=".9" fill="none"/>
<path d="M1138 47 L1150 42 M1148 63 L1160 58 M1158 79 L1170 74 M1168 95 L1176 92" stroke="#6a6fb2" stroke-width=".9" fill="none"/>
<path d="M946.5 157.5 L962 148" stroke="#8a8f9a" stroke-width="2.4" stroke-dasharray="3 1.5" fill="none"/>
<defs><pattern id="hp" width="3.2" height="3.2" patternUnits="userSpaceOnUse" patternTransform="rotate(-38)"><rect width="3.2" height="3.2" fill="#f3f3ef"/><line x1="0" y1="0.5" x2="3.2" y2="0.5" stroke="#a3a8d8" stroke-width="0.8"/></pattern></defs>
<path d="M1112 186 L1134 172 L1140 186 L1120 200 Z" fill="url(#hp)"/>
<path d="M866 240 L886 232 L894 262 L872 268 Z" fill="url(#hp)"/>
<path d="M1112 304 L1176 296 L1176 310 L1114 316 Z M1133 385 L1158 356 L1176 348 L1176 364 L1158 392 L1133 392 Z M1115 416 L1143 411 L1130 450 L1115 450 Z M1076 467 L1114 467 L1118 480 L1096 500 L1100 524 L1076 524 Z M1143 498 L1176 495 L1176 522 L1152 518 Z M1076 526 L1148 534 L1176 545 L1176 558 L1076 558 Z" fill="url(#hp)"/>
<path d="M1176 378 L1160 407 L1176 414" fill="none" stroke="#fdfdfd" stroke-width="4.5"/>
<polygon points="1113.9,350.3 1122.6,330.7 1149.9,328.5 1174.5,333 1174.5,344 1156.4,352.5 1147.7,359 1131.3,358 1131.3,377.5 1125.9,387.4 1119.4,386.3" fill="#c9c7b6"/>
<polygon points="1115.4,348.3 1124.1,328.7 1151.4,326.5 1176,331 1176,342 1157.9,350.5 1149.2,357 1132.8,356 1132.8,375.5 1127.4,385.4 1120.9,384.3" fill="#e4e1d3"/>
<polygon points="1123.5,459.2 1139.9,437.4 1148.5,443 1151.8,436.4 1174.5,447 1174.5,495 1161.5,497 1157.3,482 1146.5,460.3 1133.3,468" fill="#c9c7b6"/>
<polygon points="1125,457.2 1141.4,435.4 1150,441 1153.3,434.4 1176,445 1176,493 1163,495 1158.8,480 1148,458.3 1134.8,466" fill="#e4e1d3"/>
<path d="M1114 501 L1163 481" stroke="#e4e1d3" stroke-width="5.5" fill="none"/>
<circle cx="1112.8" cy="502.4" r="17.4" fill="#c9c7b6"/><circle cx="1114.1" cy="500.8" r="17.4" fill="#e4e1d3"/>
<path d="M723.8 57.1 a12.7 12.7 0 1 0 0.1 0" fill="none" stroke="#98787a" stroke-width="1" stroke-dasharray="1.2 2.4" opacity=".62"/>
<path d="M725.4 207.9 a12.7 12.7 0 1 0 0.1 0" fill="none" stroke="#98787a" stroke-width="1" stroke-dasharray="1.2 2.4" opacity=".62"/>
<path d="M712 38 V 290" fill="none" stroke="#98787a" stroke-width="1" stroke-dasharray="1.2 2.4" opacity=".62"/>
<path d="M736.5 72 V 290" fill="none" stroke="#98787a" stroke-width="1" stroke-dasharray="1.2 2.4" opacity=".62"/>
<path d="M717 38 V58" fill="none" stroke="#98787a" stroke-width="1" stroke-dasharray="1.2 2.4" opacity=".62"/>
<path d="M723.8 38 V57" fill="none" stroke="#98787a" stroke-width="1" stroke-dasharray="1.2 2.4" opacity=".62"/>
<path d="M730.5 38 V58" fill="none" stroke="#98787a" stroke-width="1" stroke-dasharray="1.2 2.4" opacity=".62"/>
<path d="M680 38 C686 52 700 62 712 66" fill="none" stroke="#98787a" stroke-width="1" stroke-dasharray="1.2 2.4" opacity=".62"/>
<path d="M750 38 C748 52 742 62 737 66" fill="none" stroke="#98787a" stroke-width="1" stroke-dasharray="1.2 2.4" opacity=".62"/>
<path d="M666.8 38 L666.8 58 L673.5 75 L673.5 91.6 L640 125 L602 150" fill="none" stroke="#98787a" stroke-width="1" stroke-dasharray="1.2 2.4" opacity=".62"/>
<path d="M602 96 L640 88 L673.5 76.5 L712 69.8" fill="none" stroke="#98787a" stroke-width="1" stroke-dasharray="1.2 2.4" opacity=".62"/>
<path d="M736.5 74.9 L774 74.9 L804 69.8 L814 66.5" fill="none" stroke="#98787a" stroke-width="1" stroke-dasharray="1.2 2.4" opacity=".62"/>
<path d="M749 55 L757.3 81.6 L750.5 93.3" fill="none" stroke="#98787a" stroke-width="1" stroke-dasharray="1.2 2.4" opacity=".62"/>
<path d="M750.5 93.3 L777.4 84.9 L804 71.5" fill="none" stroke="#98787a" stroke-width="1" stroke-dasharray="1.2 2.4" opacity=".62"/>
<path d="M640 135 L702 185.4 L712 195.5" fill="none" stroke="#98787a" stroke-width="1" stroke-dasharray="1.2 2.4" opacity=".62"/>
<path d="M602 108 L640 135" fill="none" stroke="#98787a" stroke-width="1" stroke-dasharray="1.2 2.4" opacity=".62"/>
<path d="M736.5 123.4 L702 185.4 L666.8 238 L639.6 275 L615 300" fill="none" stroke="#98787a" stroke-width="1" stroke-dasharray="1.2 2.4" opacity=".62"/>
<path d="M736.5 123.4 L767.3 180.4 L745.5 227.3 L778.9 253 L796.6 275" fill="none" stroke="#98787a" stroke-width="1" stroke-dasharray="1.2 2.4" opacity=".62"/>
<path d="M757.3 108.4 L804.2 155.3 L841 188.8 L900 232.3" fill="none" stroke="#98787a" stroke-width="1" stroke-dasharray="1.2 2.4" opacity=".62"/>
<path d="M767.3 180.4 L804.2 155.3 L827.6 133.5" fill="none" stroke="#98787a" stroke-width="1" stroke-dasharray="1.2 2.4" opacity=".62"/>
<path d="M745.5 227.3 L779 217.6 L810.9 195.5 L841 188.8 L900 172" fill="none" stroke="#98787a" stroke-width="1" stroke-dasharray="1.2 2.4" opacity=".62"/>
<path d="M841 135 L810.9 195.5 L784 238 L774.5 244" fill="none" stroke="#98787a" stroke-width="1" stroke-dasharray="1.2 2.4" opacity=".62"/>
<path d="M757.3 101.6 L784 108.4 L807.5 125 L827.6 126.8" fill="none" stroke="#98787a" stroke-width="1" stroke-dasharray="1.2 2.4" opacity=".62"/>
<path d="M774 38 L814 71.5 L841 108.4 L871 152 L900 178.7 L915 225" fill="none" stroke="#98787a" stroke-width="1" stroke-dasharray="1.2 2.4" opacity=".62"/>
<path d="M800 80 a9 13 0 1 0 18 0 a9 13 0 1 0 -18 0" fill="none" stroke="#98787a" stroke-width="1" stroke-dasharray="1.2 2.4" opacity=".62"/>
<path d="M900 195.5 L871 215.6 L854.4 238 L850 260" fill="none" stroke="#98787a" stroke-width="1" stroke-dasharray="1.2 2.4" opacity=".62"/>
<path d="M712.5 224 L675 246 L639.6 275" fill="none" stroke="#98787a" stroke-width="1" stroke-dasharray="1.2 2.4" opacity=".62"/>
<path d="M602 248.5 L675 246.3" fill="none" stroke="#98787a" stroke-width="1" stroke-dasharray="1.2 2.4" opacity=".62"/>
<path d="M602 264 L639.6 275 L668 300" fill="none" stroke="#98787a" stroke-width="1" stroke-dasharray="1.2 2.4" opacity=".62"/>
<path d="M736.4 227.5 L774.5 244 L823 244 L862 235" fill="none" stroke="#98787a" stroke-width="1" stroke-dasharray="1.2 2.4" opacity=".62"/>
<path d="M699 180 L668 235" fill="none" stroke="#98787a" stroke-width="1" stroke-dasharray="1.2 2.4" opacity=".62"/>
<path d="M880 160 L862 180 L823 197.7" fill="none" stroke="#98787a" stroke-width="1" stroke-dasharray="1.2 2.4" opacity=".62"/>
<path d="M905 172 L880 215 L850 245" fill="none" stroke="#98787a" stroke-width="1" stroke-dasharray="1.2 2.4" opacity=".62"/>
<path d="M950 160 L920 200 L880 240 L860 270" fill="none" stroke="#98787a" stroke-width="1" stroke-dasharray="1.2 2.4" opacity=".62"/>
<path d="M958 150 L946 158" fill="none" stroke="#98787a" stroke-width="1" stroke-dasharray="1.2 2.4" opacity=".62"/>
<path d="M915 225 L940 270 L960 290" fill="none" stroke="#98787a" stroke-width="1" stroke-dasharray="1.2 2.4" opacity=".62"/>
<path d="M920 170 L950 230 L985 290" fill="none" stroke="#98787a" stroke-width="1" stroke-dasharray="1.2 2.4" opacity=".62"/>
<path d="M602 300 C640 290 660 320 640 350" fill="none" stroke="#98787a" stroke-width="1" stroke-dasharray="1.2 2.4" opacity=".62"/>
<path d="M660 290 C700 300 700 350 660 370 C640 400 680 430 714 440" fill="none" stroke="#98787a" stroke-width="1" stroke-dasharray="1.2 2.4" opacity=".62"/>
<path d="M620 330 C650 340 680 330 700 300" fill="none" stroke="#98787a" stroke-width="1" stroke-dasharray="1.2 2.4" opacity=".62"/>
<path d="M640 440 C660 470 700 460 714 430" fill="none" stroke="#98787a" stroke-width="1" stroke-dasharray="1.2 2.4" opacity=".62"/>
<path d="M602 480 L640 500" fill="none" stroke="#98787a" stroke-width="1" stroke-dasharray="1.2 2.4" opacity=".62"/>
<path d="M690 440 C700 470 690 490 670 500" fill="none" stroke="#98787a" stroke-width="1" stroke-dasharray="1.2 2.4" opacity=".62"/>
<path d="M1020 130 L1060 100 L1100 78 L1140 58" fill="none" stroke="#98787a" stroke-width="1" stroke-dasharray="1.2 2.4" opacity=".62"/>
<path d="M1000 150 L1040 122 L1090 92" fill="none" stroke="#98787a" stroke-width="1" stroke-dasharray="1.2 2.4" opacity=".62"/>
<path d="M1010 160 L1060 240 L1072 258" fill="none" stroke="#98787a" stroke-width="1" stroke-dasharray="1.2 2.4" opacity=".62"/>
<path d="M1024 152 L1080 240" fill="none" stroke="#98787a" stroke-width="1" stroke-dasharray="1.2 2.4" opacity=".62"/>
<path d="M1036 150 L1084 226" fill="none" stroke="#98787a" stroke-width="1" stroke-dasharray="1.2 2.4" opacity=".62"/>
<path d="M1064 262 L1176 256" fill="none" stroke="#98787a" stroke-width="1" stroke-dasharray="1.2 2.4" opacity=".62"/>
<path d="M1072 272 L1176 264" fill="none" stroke="#98787a" stroke-width="1" stroke-dasharray="1.2 2.4" opacity=".62"/>
<path d="M957 196 L1012 278" fill="none" stroke="#98787a" stroke-width="1" stroke-dasharray="1.2 2.4" opacity=".62"/>
<path d="M953 198 L1008 280" fill="none" stroke="#98787a" stroke-width="1" stroke-dasharray="1.2 2.4" opacity=".62"/>
<path d="M1000 38 L1020 90 L1027 100" fill="none" stroke="#98787a" stroke-width="1" stroke-dasharray="1.2 2.4" opacity=".62"/>
<path d="M925 466 C930 500 950 530 990 558" fill="none" stroke="#98787a" stroke-width="1" stroke-dasharray="1.2 2.4" opacity=".62"/>
<path d="M1000 466 C990 500 1000 530 1020 558" fill="none" stroke="#98787a" stroke-width="1" stroke-dasharray="1.2 2.4" opacity=".62"/>
<path d="M1040 466 L1050 558" fill="none" stroke="#98787a" stroke-width="1" stroke-dasharray="1.2 2.4" opacity=".62"/>
<path d="M1086 466 L1090 520 L1110 558" fill="none" stroke="#98787a" stroke-width="1" stroke-dasharray="1.2 2.4" opacity=".62"/>
<path d="M800 466 L830 558" fill="none" stroke="#98787a" stroke-width="1" stroke-dasharray="1.2 2.4" opacity=".62"/>
<path d="M873 490 L1000 520 L1100 540" fill="none" stroke="#98787a" stroke-width="1" stroke-dasharray="1.2 2.4" opacity=".62"/>
<path d="M940 466 L1000 520" fill="none" stroke="#98787a" stroke-width="1" stroke-dasharray="1.2 2.4" opacity=".62"/>
<path d="M1060 466 L1000 520" fill="none" stroke="#98787a" stroke-width="1" stroke-dasharray="1.2 2.4" opacity=".62"/>
<path d="M700 540 L800 500 L884 506" fill="none" stroke="#98787a" stroke-width="1" stroke-dasharray="1.2 2.4" opacity=".62"/>
<path d="M760 466 L740 500" fill="none" stroke="#98787a" stroke-width="1" stroke-dasharray="1.2 2.4" opacity=".62"/>
<path d="M855 475 L848 505 L862 540" fill="none" stroke="#98787a" stroke-width="1" stroke-dasharray="1.2 2.4" opacity=".62"/>
<path d="M848 505 L830 510" fill="none" stroke="#98787a" stroke-width="1" stroke-dasharray="1.2 2.4" opacity=".62"/>
<g transform="translate(750.5 99)"><circle r="7.6" fill="#fff" stroke="#6a6a9c" stroke-width="1"/><path d="M-3.4 -1.6 H2.6 V1.4 C2.6 3.4 1.4 4.4 -0.4 4.4 C-2.2 4.4 -3.4 3.4 -3.4 1.4 Z M2.6 -0.8 H4 V1.6 H2.6" fill="#3c3c50" stroke="#3c3c50" stroke-width=".6"/><path d="M-2.4 -4.4 V-2.8 M-0.4 -4.4 V-2.8 M1.6 -4.4 V-2.8" stroke="#3c3c50" stroke-width=".8"/></g>
<g transform="translate(835 127)"><circle r="7.6" fill="#fff" stroke="#6a6a9c" stroke-width="1"/><path d="M-3.4 -1.6 H2.6 V1.4 C2.6 3.4 1.4 4.4 -0.4 4.4 C-2.2 4.4 -3.4 3.4 -3.4 1.4 Z M2.6 -0.8 H4 V1.6 H2.6" fill="#3c3c50" stroke="#3c3c50" stroke-width=".6"/><path d="M-2.4 -4.4 V-2.8 M-0.4 -4.4 V-2.8 M1.6 -4.4 V-2.8" stroke="#3c3c50" stroke-width=".8"/></g>
<g transform="translate(965.5 239)"><circle r="7.6" fill="#fff" stroke="#6a6a9c" stroke-width="1"/><path d="M-3.4 -1.6 H2.6 V1.4 C2.6 3.4 1.4 4.4 -0.4 4.4 C-2.2 4.4 -3.4 3.4 -3.4 1.4 Z M2.6 -0.8 H4 V1.6 H2.6" fill="#3c3c50" stroke="#3c3c50" stroke-width=".6"/><path d="M-2.4 -4.4 V-2.8 M-0.4 -4.4 V-2.8 M1.6 -4.4 V-2.8" stroke="#3c3c50" stroke-width=".8"/></g>
<g transform="translate(613 383)"><circle r="7.6" fill="#fff" stroke="#6a6a9c" stroke-width="1"/><path d="M-3.4 -1.6 H2.6 V1.4 C2.6 3.4 1.4 4.4 -0.4 4.4 C-2.2 4.4 -3.4 3.4 -3.4 1.4 Z M2.6 -0.8 H4 V1.6 H2.6" fill="#3c3c50" stroke="#3c3c50" stroke-width=".6"/><path d="M-2.4 -4.4 V-2.8 M-0.4 -4.4 V-2.8 M1.6 -4.4 V-2.8" stroke="#3c3c50" stroke-width=".8"/></g>
<g transform="translate(1101 509.5)"><circle r="7.6" fill="#fff" stroke="#6a6a9c" stroke-width="1"/><path d="M-3.4 -1.6 H2.6 V1.4 C2.6 3.4 1.4 4.4 -0.4 4.4 C-2.2 4.4 -3.4 3.4 -3.4 1.4 Z M2.6 -0.8 H4 V1.6 H2.6" fill="#3c3c50" stroke="#3c3c50" stroke-width=".6"/><path d="M-2.4 -4.4 V-2.8 M-0.4 -4.4 V-2.8 M1.6 -4.4 V-2.8" stroke="#3c3c50" stroke-width=".8"/></g>
<g transform="translate(1168.6 453.5)"><circle r="7.6" fill="#fff" stroke="#6a6a9c" stroke-width="1"/><path d="M-3.4 -1.6 H2.6 V1.4 C2.6 3.4 1.4 4.4 -0.4 4.4 C-2.2 4.4 -3.4 3.4 -3.4 1.4 Z M2.6 -0.8 H4 V1.6 H2.6" fill="#3c3c50" stroke="#3c3c50" stroke-width=".6"/><path d="M-2.4 -4.4 V-2.8 M-0.4 -4.4 V-2.8 M1.6 -4.4 V-2.8" stroke="#3c3c50" stroke-width=".8"/></g>
<g transform="translate(877 255)"><circle r="7.4" fill="#fff" stroke="#6a6fa0" stroke-width="1.1"/><text x="0" y="4" text-anchor="middle" font-family="Liberation Sans,sans-serif" font-weight="700" font-size="11.5" fill="#5a5f8c">P</text></g>
<g transform="translate(1126 187.2)"><circle r="7.4" fill="#fff" stroke="#6a6fa0" stroke-width="1.1"/><text x="0" y="4" text-anchor="middle" font-family="Liberation Sans,sans-serif" font-weight="700" font-size="11.5" fill="#5a5f8c">P</text></g>
<g transform="translate(1148.1 375.6)"><circle r="7.4" fill="#fff" stroke="#6a6fa0" stroke-width="1.1"/><text x="0" y="4" text-anchor="middle" font-family="Liberation Sans,sans-serif" font-weight="700" font-size="11.5" fill="#5a5f8c">P</text></g>
<g transform="translate(1167 376.2)"><circle r="7.4" fill="#fff" stroke="#6a6fa0" stroke-width="1.1"/><text x="0" y="4" text-anchor="middle" font-family="Liberation Sans,sans-serif" font-weight="700" font-size="11.5" fill="#5a5f8c">P</text></g>
<g transform="translate(1122 408.7)"><circle r="7.4" fill="#fff" stroke="#6a6fa0" stroke-width="1.1"/><text x="0" y="4" text-anchor="middle" font-family="Liberation Sans,sans-serif" font-weight="700" font-size="11.5" fill="#5a5f8c">P</text></g>
<g transform="translate(1090.2 482.3)"><circle r="7.4" fill="#fff" stroke="#6a6fa0" stroke-width="1.1"/><text x="0" y="4" text-anchor="middle" font-family="Liberation Sans,sans-serif" font-weight="700" font-size="11.5" fill="#5a5f8c">P</text></g>
<g transform="translate(1172 432.2)"><circle r="7.4" fill="#fff" stroke="#6a6fa0" stroke-width="1.1"/><text x="0" y="4" text-anchor="middle" font-family="Liberation Sans,sans-serif" font-weight="700" font-size="11.5" fill="#5a5f8c">P</text></g>
<text x="965.8" y="257.3" text-anchor="middle" font-family="DejaVu Sans,DejaVu Sans,sans-serif" font-size="9.4" fill="#222" stroke="#fff" stroke-width="2" stroke-linejoin="round" paint-order="stroke" style="font-style:italic;">Велокафе</text>
<text x="1082" y="170.5" text-anchor="middle" font-family="DejaVu Sans Condensed,DejaVu Sans,sans-serif" font-size="8.8" fill="#222" stroke="#fff" stroke-width="2" stroke-linejoin="round" paint-order="stroke" style="">23</text>
<text x="1134" y="105" text-anchor="middle" font-family="DejaVu Sans Condensed,DejaVu Sans,sans-serif" font-size="8.8" fill="#222" stroke="#fff" stroke-width="2" stroke-linejoin="round" paint-order="stroke" style="">8</text>
<text x="1160.3" y="158.8" text-anchor="middle" font-family="DejaVu Sans Condensed,DejaVu Sans,sans-serif" font-size="8.8" fill="#222" stroke="#fff" stroke-width="2" stroke-linejoin="round" paint-order="stroke" style="">13Б</text>
<text x="1126.6" y="231" text-anchor="middle" font-family="DejaVu Sans Condensed,DejaVu Sans,sans-serif" font-size="8.8" fill="#222" stroke="#fff" stroke-width="2" stroke-linejoin="round" paint-order="stroke" style="">13 к2</text>
<text x="1138.8" y="355" text-anchor="middle" font-family="DejaVu Sans Condensed,DejaVu Sans,sans-serif" font-size="8.8" fill="#222" stroke="#fff" stroke-width="2" stroke-linejoin="round" paint-order="stroke" style="">35</text>
<text x="1140.8" y="400.5" text-anchor="middle" font-family="DejaVu Sans Condensed,DejaVu Sans,sans-serif" font-size="8.8" fill="#222" stroke="#fff" stroke-width="2" stroke-linejoin="round" paint-order="stroke" style="">35А</text>
<text x="1147" y="472" text-anchor="start" font-family="DejaVu Sans,DejaVu Sans,sans-serif" font-size="9.4" fill="#222" stroke="#fff" stroke-width="2" stroke-linejoin="round" paint-order="stroke" style="font-style:italic;">Столо</text>
<text x="601" y="400" text-anchor="start" font-family="DejaVu Sans,DejaVu Sans,sans-serif" font-size="9.4" fill="#222" stroke="#fff" stroke-width="2" stroke-linejoin="round" paint-order="stroke" style="font-style:italic;">привале</text>
<text x="690" y="385" text-anchor="start" font-family="DejaVu Sans Condensed,DejaVu Sans,sans-serif" font-size="8.6" fill="#444" stroke="#fff" stroke-width="2" stroke-linejoin="round" paint-order="stroke" style="">Трыю</text>
<text x="699" y="398" text-anchor="start" font-family="DejaVu Sans Condensed,DejaVu Sans,sans-serif" font-size="8.6" fill="#444" stroke="#fff" stroke-width="2" stroke-linejoin="round" paint-order="stroke" style="">Арк</text>
<text x="703" y="410" text-anchor="start" font-family="DejaVu Sans Condensed,DejaVu Sans,sans-serif" font-size="8.6" fill="#444" stroke="#fff" stroke-width="2" stroke-linejoin="round" paint-order="stroke" style="">Пе</text>
<text x="600" y="449" text-anchor="start" font-family="DejaVu Sans Condensed,DejaVu Sans,sans-serif" font-size="8.6" fill="#444" stroke="#fff" stroke-width="2" stroke-linejoin="round" paint-order="stroke" style="">а</text>
<text x="600" y="462" text-anchor="start" font-family="DejaVu Sans Condensed,DejaVu Sans,sans-serif" font-size="8.6" fill="#444" stroke="#fff" stroke-width="2" stroke-linejoin="round" paint-order="stroke" style="">рад</text>
<text x="600" y="475" text-anchor="start" font-family="DejaVu Sans Condensed,DejaVu Sans,sans-serif" font-size="8.6" fill="#444" stroke="#fff" stroke-width="2" stroke-linejoin="round" paint-order="stroke" style="">"</text>
<text x="636.5" y="486.5" text-anchor="start" transform="rotate(-43.7 636.5 486.5)" font-family="DejaVu Sans,DejaVu Sans,sans-serif" font-size="7.3" fill="#444" stroke="#fff" stroke-width="2" stroke-linejoin="round" paint-order="stroke" style="">Канатный переулок</text>
<text x="819" y="280" text-anchor="start" transform="rotate(-48 819 280)" font-family="DejaVu Sans,DejaVu Sans,sans-serif" font-size="7.6" fill="#444" stroke="#fff" stroke-width="2" stroke-linejoin="round" paint-order="stroke" style="">атный переулок</text>
<text x="1153" y="40" text-anchor="start" transform="rotate(58 1153 40)" font-family="DejaVu Sans,DejaVu Sans,sans-serif" font-size="10.5" fill="#111" stroke="#fff" stroke-width="2" stroke-linejoin="round" paint-order="stroke" style="">ский тр</text>
<text x="718.2" y="524.8" text-anchor="middle" font-family="DejaVu Sans,DejaVu Sans,sans-serif" font-size="7.9" fill="#222" stroke="#fff" stroke-width="2" stroke-linejoin="round" paint-order="stroke" style="font-style:italic;">Музей истории</text>
<text x="718.2" y="536.5" text-anchor="middle" font-family="DejaVu Sans,DejaVu Sans,sans-serif" font-size="7.9" fill="#222" stroke="#fff" stroke-width="2" stroke-linejoin="round" paint-order="stroke" style="font-style:italic;">Великой</text>
<text x="718.2" y="548.3" text-anchor="middle" font-family="DejaVu Sans,DejaVu Sans,sans-serif" font-size="7.9" fill="#222" stroke="#fff" stroke-width="2" stroke-linejoin="round" paint-order="stroke" style="font-style:italic;">Отечественной</text>
<text x="718.2" y="560" text-anchor="middle" font-family="DejaVu Sans,DejaVu Sans,sans-serif" font-size="7.9" fill="#222" stroke="#fff" stroke-width="2" stroke-linejoin="round" paint-order="stroke" style="font-style:italic;">войны</text>
<text x="718.5" y="515.6" text-anchor="middle" font-weight="700" font-family="DejaVu Sans,DejaVu Sans,sans-serif" font-size="9.5" fill="#3a8a2a" stroke="#fff" stroke-width="0" stroke-linejoin="round" paint-order="stroke" style="">A</text>
<text x="1081.4" y="532.4" text-anchor="start" transform="rotate(8 1081.4 532.4)" font-family="DejaVu Sans,DejaVu Sans,sans-serif" font-size="8.4" fill="#444" stroke="#fff" stroke-width="2" stroke-linejoin="round" paint-order="stroke" style="">Коммунистическая ул.</text>
<path d="M697 504 L708 497 M697 504 L702 504.5 M697 504 L699.5 499.5" stroke="#7a80b0" stroke-width="1.2" fill="none"/>
</svg>
<svg width="0" height="0" style="position:absolute"><defs>
<filter id="pblur" x="-5%" y="-5%" width="110%" height="110%"><feGaussianBlur stdDeviation="0.55"/></filter>
<symbol id="photo" viewBox="0 0 45 56" preserveAspectRatio="none">
<rect width="45" height="56" fill="#4a240e"/>
<g filter="url(#pblur)">
<rect x="6" y="0" width="39" height="22" fill="#7a3f18"/>
<rect x="8" y="4" width="8" height="34" fill="#8a4a1e"/>
<rect x="0" y="0" width="7" height="56" fill="#0b0a09"/>
<rect x="0" y="1.5" width="8" height="7" fill="#e8e6e2"/>
<rect x="30" y="3" width="15" height="4" fill="#6a3514"/>
<rect x="33" y="7.5" width="12" height="3.6" fill="#d9d4c6"/>
<rect x="27" y="12" width="18" height="7" fill="#7a3e18"/>
<rect x="30" y="20" width="15" height="10" fill="#231611"/>
<rect x="27" y="30" width="18" height="6" fill="#6a3616"/>
<rect x="6" y="36" width="39" height="20" fill="#1a2610"/>
<rect x="40" y="36" width="5" height="14" fill="#3f6a3a"/>
<rect x="0" y="52" width="45" height="4" fill="#2c3612"/>
<path d="M16.6 9 C16.6 5.6 24.6 5.4 24.8 10 L24.4 16 L22.6 19 L19 19 L17 16 Z" fill="#c79a80"/>
<path d="M16 10.5 C15.6 4.6 25.4 4.2 25.4 10.6 L24.8 13 C23.6 8.6 19.6 8 17.4 9.4 L16.6 14 Z" fill="#5e4128"/>
<path d="M12.6 22 C13.6 19.6 17.6 19 19.6 20 L21.4 23 L23.6 20 C26.6 19.2 30.6 20.4 31.2 23.6 L30.4 29 L28.6 29.6 L28.8 36 L30 44 L30.6 52 L24 54 L14 53 L10.4 50 L12.4 42 L14 36 L13.6 30 L12 29 Z" fill="#e9e4de"/>
<path d="M12.4 28 L10.6 36 L11.6 42 L13.6 41 L14 31 Z M30.4 29 L31 35 L27.6 42 L26 41 L28.8 35 Z" fill="#c99a7e"/>
<path d="M20 21 L21.4 26 L23 21 L21.6 23.4 Z" fill="#c79a80"/>
<g fill="#c4523f"><circle cx="16" cy="23" r=".9"/><circle cx="19" cy="26.4" r=".9"/><circle cx="25" cy="24" r=".9"/><circle cx="28" cy="27" r=".8"/><circle cx="17" cy="31" r=".9"/><circle cx="22" cy="30" r=".8"/><circle cx="26" cy="32.6" r=".9"/><circle cx="19.6" cy="36" r=".9"/><circle cx="24" cy="37.6" r=".8"/><circle cx="27" cy="46" r=".9"/><circle cx="14" cy="47" r=".8"/></g>
<g fill="#5f7a58"><circle cx="21" cy="24.6" r=".7"/><circle cx="15" cy="27.6" r=".7"/><circle cx="24" cy="28.4" r=".7"/><circle cx="20" cy="33" r=".7"/><circle cx="27.4" cy="38" r=".7"/><circle cx="16" cy="38.6" r=".7"/></g>
<path d="M12.4 40.4 L24.4 39.6 L25 44.4 L12 46 Z" fill="#f4f2ee"/>
<path d="M17 54 L21.6 46.6 L27.6 45.6 L27 50 L24.6 56 L17.6 56 Z" fill="#cfa488"/>
</g>
</symbol></defs></svg>
<!-- map tool buttons (coords relative to #map: x-602, y-38) -->
<div class="mbtn" style="left:12px;top:12px;height:28px">
 <svg style="left:7px;top:7px" width="14" height="14" viewBox="0 0 14 14"><circle cx="5.8" cy="5.8" r="4.6" fill="none" stroke="#545b6e" stroke-width="1.4"/><path d="M9.2 9.2 L13 13" stroke="#545b6e" stroke-width="1.6"/></svg>
</div>
<div class="mbtn" style="left:12px;top:48px;height:56px">
 <svg style="left:6px;top:8.4px" width="16" height="11" viewBox="0 0 18 12"><path d="M1 6 C4 1 14 1 17 6 C14 11 4 11 1 6 Z" fill="none" stroke="#545b6e" stroke-width="1.3"/><circle cx="9" cy="5.4" r="2.9" fill="#545b6e"/><circle cx="8" cy="4.4" r="1" fill="#fff"/></svg>
 <svg style="left:6px;top:36.6px" width="16" height="12" viewBox="0 0 16 13"><path d="M0.4 1.6 L4.6 0.2 V11.2 L0.4 12.6 Z M5.8 0.2 L10.2 1.6 V12.6 L5.8 11.2 Z M11.4 1.6 L15.6 0.2 V11.2 L11.4 12.6 Z" fill="#545b6e"/></svg>
</div>
<div class="mbtn" style="left:12px;top:116px;height:112px">
 <svg style="left:5px;top:6px" width="18" height="19" viewBox="0 0 18 19" fill="none" stroke="#545b6e"><path d="M1.4 3.2 H16.6 M1.4 3.2 L4 0.8 M1.4 3.2 L4 5.6 M16.6 3.2 L14 0.8 M16.6 3.2 L14 5.6" stroke-width="1.3"/><rect x="0.8" y="9.6" width="16.4" height="8" rx="1.2" stroke-width="1.5"/><path d="M4.4 9.8 V13 M7.4 9.8 V13 M10.6 9.8 V13 M13.6 9.8 V13" stroke-width="1.3"/></svg>
 <svg style="left:6px;top:34px" width="16" height="18" viewBox="0 0 16 18" fill="none" stroke="#545b6e" stroke-width="1.5"><circle cx="13" cy="2.8" r="1.9"/><circle cx="3" cy="15.2" r="1.9"/><path d="M11 2.8 H5 C1.4 2.8 1.4 9 5 9 H11 C14.6 9 14.6 15.2 11 15.2 H5"/></svg>
 <svg style="left:5px;top:62px" width="18" height="20" viewBox="0 0 18 20" fill="none" stroke="#545b6e" stroke-width="1.3"><path d="M4 0.8 C1.8 0.8 0.8 2.4 0.8 4 C0.8 6 4 9.6 4 9.6 C4 9.6 7.2 6 7.2 4 C7.2 2.4 6.2 0.8 4 0.8 Z M14 0.8 C11.8 0.8 10.8 2.4 10.8 4 C10.8 6 14 9.6 14 9.6 C14 9.6 17.2 6 17.2 4 C17.2 2.4 16.2 0.8 14 0.8 Z"/><circle cx="4" cy="4" r="0.9" fill="#545b6e"/><circle cx="14" cy="4" r="0.9" fill="#545b6e"/><circle cx="3.4" cy="16.4" r="1.9"/><circle cx="14.6" cy="16.4" r="1.9"/><path d="M5.4 16.4 H12.6"/></svg>
 <svg style="left:10px;top:92px" width="9" height="13" viewBox="0 0 9 13"><path d="M1.6 1.4 L7 6.5 L1.6 11.6" fill="none" stroke="#3b4254" stroke-width="1.8"/></svg>
</div>
<!-- zoom control -->
<div class="mbtn" style="left:532px;top:233px;height:57px"><div style="position:absolute;left:0;top:28px;width:28px;height:1px;background:#e1e3e8"></div>
 <svg style="left:8px;top:8px" width="12" height="12" viewBox="0 0 12 12"><path d="M6 0.8 V11.2 M0.8 6 H11.2" stroke="#4a5165" stroke-width="1.7"/></svg>
 <svg style="left:8px;top:37px" width="12" height="12" viewBox="0 0 12 12"><path d="M0.8 6 H11.2" stroke="#4a5165" stroke-width="1.7"/></svg>
</div>
<!-- scale bar -->
<div class="sb" style="left:12px;top:447px;width:2px;height:42px"></div>
<div class="sb" style="left:12px;top:466.5px;width:75px;height:2px"></div>
<div class="sb" style="left:85px;top:447px;width:2px;height:21px"></div>
<div class="sb" style="left:57.5px;top:467px;width:2px;height:22px"></div>
<div class="sbt" style="left:14px;top:450px;width:71px">100 m</div>
<div class="sbt" style="left:14px;top:472px;width:44px">200 ft</div>
<div id="osm">© OpenStreetMap contributors</div>
<div id="coords">N 53° 55.0706' : E 027° 32.4125'</div>
<!-- unit + marker -->
<svg style="position:absolute;left:72.5px;top:203px" width="32" height="15" viewBox="0 0 21 12" preserveAspectRatio="none"><path d="M0.5 3.4 L11.6 0.9 L11.6 10.6 L0.5 8.6 Z" fill="#dcb916"/><path d="M0.9 3.9 L11.2 2 L11.2 6.3 L0.9 6.4 Z" fill="#2b2f38"/><path d="M3.4 3.4 V6.4 M6 3 V6.4 M8.6 2.4 V6.4" stroke="#b89c14" stroke-width=".6"/><path d="M11.6 0.8 H20.2 L20.4 10.6 H11.6 Z" fill="#f2d31a"/><rect x="12.2" y="1.3" width="7.6" height="1.7" fill="#34352a"/><rect x="13" y="1.7" width="6" height=".8" fill="#b9b98a"/><rect x="12" y="3.5" width="8" height="3.4" fill="#52658f"/><path d="M12 5.4 L20 4.6 V6.9 H12 Z" fill="#7f93b8"/><rect x="11.6" y="9.6" width="8.8" height="1" fill="#a48c10"/><ellipse cx="3" cy="8.9" rx="1" ry="1.3" fill="#1d1f25"/><ellipse cx="8.6" cy="10" rx="1.1" ry="1.5" fill="#1d1f25"/></svg>
<div id="ylab">Yellow Bus</div>
<svg style="position:absolute;left:84.2px;top:211px" width="25" height="32"><use href="#photo" width="25" height="32"/></svg>
<svg style="position:absolute;left:88px;top:238px" width="16" height="22" viewBox="0 0 16 22"><path d="M2 2 L2 17 L5.8 13.6 L8.6 20 L11.4 18.8 L8.6 12.6 L13.6 12.4 Z" fill="#fff" stroke="#1b2440" stroke-width="1.3" stroke-linejoin="round"/></svg>
<!-- popup -->
<div id="pop">
 <svg style="position:absolute;left:8px;top:10px" width="17" height="17" viewBox="0 0 17 18"><circle cx="6.9" cy="3.3" r="2.1" fill="none" stroke="#545b6e" stroke-width="1.8"/><path d="M1.3 5.8 L3.5 15.4 H9.6" fill="none" stroke="#545b6e" stroke-width="2.1"/><path d="M5 7.4 C5.4 6.2 7.6 5.8 8.6 6.8 L9.8 8.2 L13.4 6.8 L14 8 L10.4 10 L9.4 10 L9.4 11.2 L12.4 11.2 C13.2 11.2 13.6 11.6 14 12.2 L16.4 16 L14.2 16.6 L12 13.6 L7 13.6 C5.8 13.6 5.2 12.8 5.1 11.8 Z" fill="#545b6e"/></svg>
 <div id="ptitle">Алина Синицина</div>
 <div class="psep" style="left:8px;top:38px;width:384px"></div>
 <div id="pmsg">2023-04-25 12:20:35: посадка в 'Yellow Bus' около<br>'Канатный пер.'</div>
 <div class="psep" style="left:8px;top:95px;width:384px"></div>
 <svg style="position:absolute;left:8px;top:103.7px" width="45" height="56"><use href="#photo" width="45" height="56"/></svg>
 <div class="prow" style="top:106px"><b>Ресурс:</b> <span style="letter-spacing:-0.25px">alse_test</span></div>
 <div class="psep" style="left:61px;top:131.5px;width:331px"></div>
 <div class="prow" style="top:136px"><b>Возраст:</b> 26</div>
 <div class="prow" style="top:160px"><b>Профессия:</b> Актриса</div>
</div>
</div>
<div id="foot"><svg style="position:absolute;left:21px;top:12px" width="16" height="14" viewBox="0 0 16 14"><rect x="0.7" y="0.7" width="14.6" height="12.6" fill="#fff" stroke="#1c2540" stroke-width="1.4"/><rect x="0.7" y="0.7" width="4.6" height="12.6" fill="#1c2540"/></svg>
<svg style="position:absolute;left:56px;top:12px" width="14" height="14" viewBox="0 0 14 14" fill="#a6aab5"><rect x="0" y="0" width="4" height="4"/><rect x="5" y="0" width="4" height="4"/><rect x="10" y="0" width="4" height="4"/><rect x="0" y="5" width="4" height="4"/><rect x="5" y="5" width="4" height="4"/><rect x="10" y="5" width="4" height="4"/><rect x="0" y="10" width="4" height="4"/><rect x="5" y="10" width="4" height="4"/><rect x="10" y="10" width="4" height="4"/></svg>
<div id="gurtam">© Gurtam</div>
<svg style="position:absolute;left:680px;top:10.6px" width="16" height="16" viewBox="0 0 16 16"><path d="M0.4 0.4 H15.6 V12 H13 L15.6 15.2 L9.6 12 H0.4 Z" fill="#4a5165"/><circle cx="8" cy="4.4" r="2" fill="#fff"/><path d="M4.2 9.8 C4.4 7.4 11.6 7.4 11.8 9.8 Z" fill="#fff"/></svg>
<svg style="position:absolute;left:711px;top:12.2px" width="17" height="13" viewBox="0 0 17 13"><rect width="17" height="13" fill="#a6aab5"/><rect x="0" y="2.4" width="17" height="1.6" fill="#fff"/><rect x="3" y="7" width="7" height="1.6" fill="#fff" opacity=".9"/></svg>
<svg style="position:absolute;left:744px;top:12.2px" width="22" height="13" viewBox="0 0 22 13"><path d="M0 0 H16 V6 L11 9.6 H0 Z" fill="#a6aab5"/><path d="M1 0.8 L8 6 L15 0.8" fill="none" stroke="#fff" stroke-width="1.4"/><path d="M21.6 6.4 H16 M17.8 4.4 L15.6 6.4 L17.8 8.4 M11.6 10 H17 M15.2 8 L17.4 10 L15.2 12" stroke="#a6aab5" stroke-width="1.3" fill="none"/></svg>
<svg style="position:absolute;left:783px;top:11.6px" width="16" height="14" viewBox="0 0 16 14"><rect width="16" height="14" fill="#a6aab5"/><path d="M1.4 12.4 L6 6.6 L9 10 L11 8.2 L14.6 12.4 Z" fill="#fff"/><circle cx="11.6" cy="3.8" r="1.5" fill="#fff"/></svg>
<svg style="position:absolute;left:815px;top:12.6px" width="20" height="10" viewBox="0 0 20 10"><rect x="0" y="0" width="9" height="10" fill="#1c2540"/><rect x="10.4" y="0" width="9.2" height="10" fill="#1c2540"/><path d="M1.6 2.4 H7.4 M1.6 5 H7.4 M1.6 7.6 H7.4" stroke="#fff" stroke-width="1"/></svg>
<div id="clock">04:38:31 (-03)</div>
</div>
</div>
</body>
</html>
